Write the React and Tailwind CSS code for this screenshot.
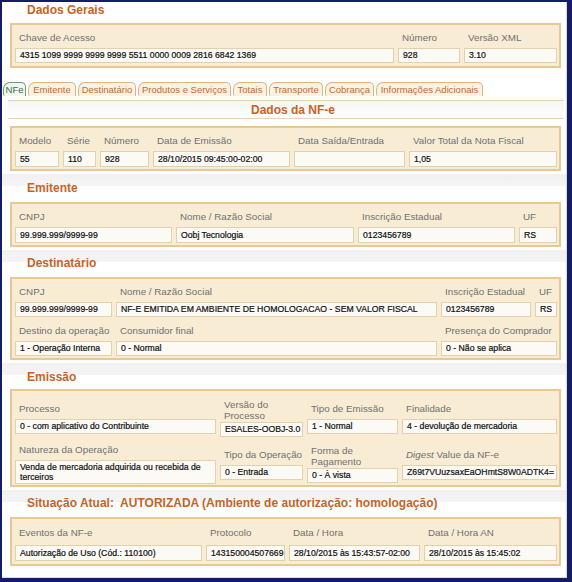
import React from "react";

// Caption above an input box
function Label({ children, two, gap = "mb-[4px]" }) {
  return (
    <div
      className={
        two
          ? "pl-[4px] text-[9.8px] leading-[11px] text-[#707070] mb-[1px]"
          : "pl-[4px] text-[9.8px] leading-[12px] text-[#707070] whitespace-nowrap " + gap
      }
    >
      {children}
    </div>
  );
}

// Read-only value box
function Value({ children, tall, multi }) {
  return (
    <div
      className={
        (multi
          ? "h-[24px] leading-[10px] pt-[1px] "
          : tall
          ? "h-[16px] leading-[14px] whitespace-nowrap "
          : "h-[15px] leading-[13px] whitespace-nowrap ") +
        "border border-[#e3d1ad] bg-[#fbfaf5] pl-[4px] pr-[2px] text-[8.7px] text-[#101010] [-webkit-text-stroke:0.2px_#101010] overflow-hidden"
      }
    >
      {children}
    </div>
  );
}

function Field({ label, value, two, tall, multi, gap, className = "" }) {
  return (
    <div className={"flex flex-col " + className}>
      <Label two={two} gap={gap}>
        {label}
      </Label>
      <Value tall={tall} multi={multi}>
        {value}
      </Value>
    </div>
  );
}

// Orange section title with the faint grey band behind it
function Heading({ children, className = "" }) {
  return (
    <div
      className={
        "pl-[25px] bg-[linear-gradient(to_bottom,#ffffff_3px,#f1f1f1_3px,#f4f4f4_15px,#ffffff_15px)] " +
        className
      }
    >
      <div className="text-[12px] leading-[14px] font-bold text-[#c8631f] whitespace-pre">
        {children}
      </div>
    </div>
  );
}

const box =
  "ml-[8px] w-[551px] border-2 border-[#e8c893] bg-[#f8ecd5] pl-[3px] pr-[2px] grid gap-x-[4px]";

const tabs = [
  { t: "NFe", w: "w-[23px]", active: true },
  { t: "Emitente", w: "w-[48px]" },
  { t: "Destinatário", w: "w-[58px]" },
  { t: "Produtos e Serviços", w: "w-[93px]" },
  { t: "Totais", w: "w-[34px]" },
  { t: "Transporte", w: "w-[54px]" },
  { t: "Cobrança", w: "w-[49px]" },
  { t: "Informações Adicionais", w: "w-[107px]" },
];

export default function App() {
  return (
    <div className="w-[572px] h-[582px] bg-[#141c66] pt-[2px] pl-[2px] pr-[5px] pb-[4px] font-['Liberation_Sans',Arial,sans-serif]">
      <div className="h-full bg-white overflow-hidden border-r border-b border-[#d9d9d9]">
        {/* Dados Gerais */}
        <div className="h-[21px] pt-[1px] pl-[25px]">
          <div className="text-[12px] leading-[14px] font-bold text-[#c8631f]">Dados Gerais</div>
        </div>
        <div className={box + " grid-cols-[379px_62px_93px] pt-[7px] pb-[3px]"}>
          <Field label="Chave de Acesso" value="4315 1099 9999 9999 9999 5511 0000 0009 2816 6842 1369" />
          <Field label="Número" value="928" />
          <Field label="Versão XML" value="3.10" />
        </div>

        {/* Tab strip */}
        <div className="h-[14px] mt-[14px] pl-[1px] flex gap-[2px]">
          {tabs.map((tab) => (
            <div
              key={tab.t}
              className={
                tab.w +
                " h-[14px] rounded-tl-[7px] rounded-tr-[5px] rounded-bl-[2px] border border-b-0 flex items-center justify-center text-[9.5px] leading-[12px] whitespace-nowrap " +
                (tab.active
                  ? "border-[#6a9c7c] bg-[#f3f6ee] text-[#2f7352]"
                  : "border-[#dcb583] bg-[#fbf2e2] text-[#c46a2c]")
              }
            >
              {tab.t}
            </div>
          ))}
        </div>

        {/* Dados da NF-e */}
        <div className="mt-[4px] ml-[6px] mr-[2px] border-t border-b border-[#ead3b3] h-[19px] bg-[linear-gradient(to_bottom,#f4f4f4,#ffffff)] flex items-center justify-center pl-[14px]">
          <div className="text-[12px] leading-[14px] font-bold text-[#c8631f]">Dados da NF-e</div>
        </div>
        <div className={box + " mt-[7px] grid-cols-[44px_33px_49px_137px_111px_148px] pt-[7px] pb-[2px]"}>
          <Field label="Modelo" value="55" tall />
          <Field label="Série" value="110" tall />
          <Field label="Número" value="928" tall />
          <Field label="Data de Emissão" value="28/10/2015 09:45:00-02:00" tall />
          <Field label="Data Saída/Entrada" value="" tall />
          <Field label="Valor Total da Nota Fiscal" value="1,05" tall />
        </div>

        {/* Emitente */}
        <Heading className="h-[31px] pt-[10px]">Emitente</Heading>
        <div className={box + " grid-cols-[157px_178px_157px_38px] pt-[7px] pb-[2px]"}>
          <Field label="CNPJ" value="99.999.999/9999-99" tall />
          <Field label="Nome / Razão Social" value="Oobj Tecnologia" tall />
          <Field label="Inscrição Estadual" value="0123456789" tall />
          <Field label="UF" value="RS" tall />
        </div>

        {/* Destinatário */}
        <Heading className="h-[30px] pt-[9px]">Destinatário</Heading>
        <div className={box + " grid-cols-[97px_321px_90px_22px] gap-y-[8px] pt-[7px] pb-[2px]"}>
          <Field label="CNPJ" value="99.999.999/9999-99" />
          <Field label="Nome / Razão Social" value="NF-E EMITIDA EM AMBIENTE DE HOMOLOGACAO - SEM VALOR FISCAL" />
          <Field label="Inscrição Estadual" value="0123456789" />
          <Field label="UF" value="RS" />
          <Field label="Destino da operação" value="1 - Operação Interna" />
          <Field label="Consumidor final" value="0 - Normal" />
          <Field label="Presença do Comprador" value="0 - Não se aplica" className="col-span-2" />
        </div>

        {/* Emissão */}
        <Heading className="h-[29px] pt-[10px]">Emissão</Heading>
        <div className={box + " grid-cols-[201px_83px_91px_155px] gap-y-[7px] items-center pt-[8px] pb-[1px]"}>
          <Field label="Processo" value="0 - com aplicativo do Contribuinte" />
          <Field label="Versão do Processo" value="ESALES-OOBJ-3.0" two />
          <Field label="Tipo de Emissão" value="1 - Normal" />
          <Field label="Finalidade" value="4 - devolução de mercadoria" />
          <Field label="Natureza da Operação" value="Venda de mercadoria adquirida ou recebida de terceiros" multi />
          <Field label="Tipo da Operação" value="0 - Entrada" />
          <Field label="Forma de Pagamento" value="0 - À vista" two />
          <Field
            label={
              <>
                <span className="italic">Digest</span> Value da NF-e
              </>
            }
            value="Z69t7VUuzsaxEaOHmtS8W0ADTK4="
          />
        </div>

        {/* Situação */}
        <Heading className="h-[30px] pt-[9px]">{"Situação Atual:  AUTORIZADA (Ambiente de autorização: homologação)"}</Heading>
        <div className={box + " grid-cols-[187px_79px_131px_133px] pt-[8px] pb-[3px]"}>
          <Field label="Eventos da NF-e" value="Autorização de Uso (Cód.: 110100)" tall gap="mb-[6px]" />
          <Field label="Protocolo" value="143150004507669" tall gap="mb-[6px]" />
          <Field label="Data / Hora" value="28/10/2015 às 15:43:57-02:00" tall gap="mb-[6px]" />
          <Field label="Data / Hora AN" value="28/10/2015 às 15:45:02" tall gap="mb-[6px]" />
        </div>
      </div>
    </div>
  );
}
